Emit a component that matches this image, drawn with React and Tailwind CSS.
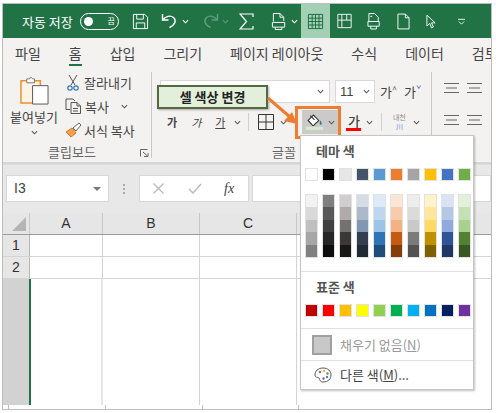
import React from 'react';

const themeTop = ['bg-[#ffffff]', 'bg-[#000000]', 'bg-[#e7e6e6]', 'bg-[#44546a]', 'bg-[#5b9bd5]', 'bg-[#ed7d31]', 'bg-[#a5a5a5]', 'bg-[#ffc000]', 'bg-[#4472c4]', 'bg-[#70ad47]'];

const themeShades = [
  ['bg-[#f2f2f2]', 'bg-[#d9d9d9]', 'bg-[#bfbfbf]', 'bg-[#a6a6a6]', 'bg-[#808080]'],
  ['bg-[#7f7f7f]', 'bg-[#595959]', 'bg-[#404040]', 'bg-[#262626]', 'bg-[#0d0d0d]'],
  ['bg-[#d0cece]', 'bg-[#afabab]', 'bg-[#757171]', 'bg-[#3b3838]', 'bg-[#181717]'],
  ['bg-[#d6dce5]', 'bg-[#adb9ca]', 'bg-[#8497b0]', 'bg-[#333f50]', 'bg-[#222a35]'],
  ['bg-[#deebf7]', 'bg-[#bdd7ee]', 'bg-[#9dc3e6]', 'bg-[#2e75b6]', 'bg-[#1f4e79]'],
  ['bg-[#fbe5d6]', 'bg-[#f8cbad]', 'bg-[#f4b183]', 'bg-[#c55a11]', 'bg-[#843c0c]'],
  ['bg-[#ededed]', 'bg-[#dbdbdb]', 'bg-[#c9c9c9]', 'bg-[#7b7b7b]', 'bg-[#525252]'],
  ['bg-[#fff2cc]', 'bg-[#ffe699]', 'bg-[#ffd966]', 'bg-[#bf9000]', 'bg-[#7f6000]'],
  ['bg-[#dae3f3]', 'bg-[#b4c7e7]', 'bg-[#8faadc]', 'bg-[#2f5597]', 'bg-[#203864]'],
  ['bg-[#e2f0d9]', 'bg-[#c5e0b4]', 'bg-[#a9d18e]', 'bg-[#548235]', 'bg-[#385723]'],
];

const standard = ['bg-[#c00000]', 'bg-[#ff0000]', 'bg-[#ffc000]', 'bg-[#ffff00]', 'bg-[#92d050]', 'bg-[#00b050]', 'bg-[#00b0f0]', 'bg-[#0070c0]', 'bg-[#002060]', 'bg-[#7030a0]'];

const tabs = ['파일', '홈', '삽입', '그리기', '페이지 레이아웃', '수식', '데이터', '검토'];

const Chev = ({ className = '', color = '#555' }) => (
  <svg viewBox="0 0 8 5" className={`w-[7px] h-[5px] shrink-0 ${className}`} fill="none" stroke={color} strokeWidth="1.2">
    <path d="M1 1l3 3 3-3" />
  </svg>
);

const Lines = ({ className = '' }) => (
  <svg viewBox="0 0 15 12" className={`w-[15px] h-[12px] ${className}`} fill="none" stroke="#666" strokeWidth="1">
    <path d="M0 1.500h15M2 6h11M0 10.500h15" />
  </svg>
);

const TitleIcons = () => (
  <>
    <svg viewBox="0 0 18 18" className="w-[17px] h-[17px] ml-[13px] shrink-0" fill="none" stroke="#fff" strokeWidth="1">
      <path d="M1.500 1.500h12l3 3v12h-15z M5 1.500v5h7v-5 M4.500 16.500v-6h9v6" />
    </svg>
    <svg viewBox="0 0 18 16" className="w-[18px] h-[16px] ml-[12px] shrink-0" fill="none" stroke="#fff" strokeWidth="1.400">
      <path d="M1.500 1v6h6 M1.500 7c3-4 8-5 11-2.500 3 3 2 7-4 10" />
    </svg>
    <Chev color="#fff" className="ml-[3px]" />
    <svg viewBox="0 0 18 16" className="w-[18px] h-[16px] ml-[12px] shrink-0" fill="none" stroke="#5f9e7c" strokeWidth="1.400">
      <path d="M16.500 1v6h-6 M16.500 7c-3-4-8-5-11-2.500-3 3-2 7 4 10" />
    </svg>
    <Chev color="#5f9e7c" className="ml-[3px]" />
    <svg viewBox="0 0 15 17" className="w-[15px] h-[17px] ml-[10px] shrink-0" fill="none" stroke="#fff" strokeWidth="1.200">
      <path d="M14 4V1H1l6.500 7.500L1 16h13v-3" />
    </svg>
    <svg viewBox="0 0 18 20" className="w-[17px] h-[19px] ml-[17px] shrink-0" fill="none" stroke="#fff" strokeWidth="1">
      <path d="M2.500 10V1.500h7l4 4v4 M9.500 1.500v4h4 M1.500 11h13v5h-13z M4.500 16v2.500h7V16" />
    </svg>
    <Chev color="#fff" className="ml-[3px]" />
    <div className="ml-[3px] w-[29px] h-[34px] shrink-0 bg-[#a3cfb4] flex items-center justify-center">
      <svg viewBox="0 0 18 18" className="w-[17px] h-[17px]" fill="none" stroke="#1d6b40" strokeWidth="1">
        <path d="M1.500 1.500h15v15h-15z M1.500 5.500h15M1.500 9h15M1.500 12.700h15M5.500 1.500v15M9 1.500v15M12.700 1.500v15" />
      </svg>
    </div>
    <svg viewBox="0 0 18 18" className="w-[17px] h-[16px] ml-[6px] shrink-0" fill="none" stroke="#fff" strokeWidth="1">
      <path d="M1.500 1.500h15v15h-15z M1.500 8h15M6 1.500v15M11.500 1.500v6.500" />
    </svg>
    <svg viewBox="0 0 16 20" className="w-[15px] h-[19px] ml-[14px] shrink-0" fill="none" stroke="#fff" strokeWidth="1">
      <path d="M2 10V1.500h6l4 4V10 M3.500 4.500h2 M1 10h12v5H1z M4 15v3h6v-3" />
    </svg>
    <svg viewBox="0 0 14 18" className="w-[13px] h-[17px] ml-[15px] shrink-0" fill="none" stroke="#fff" strokeWidth="1">
      <path d="M1 1h8l4 4v12H1z M9 1v4h4" />
    </svg>
    <svg viewBox="0 0 12 16" className="w-[11px] h-[15px] ml-[16px] shrink-0" fill="none" stroke="#fff" strokeWidth="1">
      <path d="M1 1v12l3-3 2 5 2-1-2-4.500h4z" />
    </svg>
    <svg viewBox="0 0 8 7" className="w-[7px] h-[7px] ml-[21px] shrink-0" fill="none" stroke="#fff" strokeWidth="1">
      <path d="M0 1h8M1 3.500l3 3 3-3" />
    </svg>
  </>
);

const ClipboardGroup = () => (
  <div className="w-[148px] shrink-0 flex flex-col">
    <div className="flex h-[72px]">
      <div className="w-[62px] flex flex-col items-center pt-[8px]">
        <svg viewBox="0 0 30 30" className="w-[29px] h-[29px]" fill="none">
          <path d="M1 5h20v23H1z" fill="#fdf3e5" stroke="#e8912c" strokeWidth="1.500" />
          <path d="M7 5V3h3l1-2 2 2h2v4H7z" fill="#fff" stroke="#777" />
          <path d="M13 10h16v19H13z" fill="#fff" stroke="#555" />
        </svg>
        <span className="text-[13px] leading-none mt-[5px] text-[#444] whitespace-nowrap">붙여넣기</span>
        <Chev className="mt-[7px]" />
      </div>
      <div className="flex flex-col pt-[5px] gap-[6px] text-[13px] leading-none text-[#444]">
        <div className="flex items-center h-[18px]">
          <svg viewBox="0 0 12 17" className="w-[12px] h-[17px] ml-[2px]" fill="none">
            <path d="M2 1l6 10M10 1L4 11" stroke="#555" strokeWidth="1" />
            <circle cx="3" cy="14" r="2.200" stroke="#2f75b5" strokeWidth="1.200" />
            <circle cx="9" cy="14" r="2.200" stroke="#2f75b5" strokeWidth="1.200" />
          </svg>
          <span className="ml-[5px] whitespace-nowrap">잘라내기</span>
        </div>
        <div className="flex items-center h-[18px]">
          <svg viewBox="0 0 17 16" className="w-[17px] h-[16px]" fill="none" stroke="#555" strokeWidth="1">
            <path d="M5 11.500H1V1h7l2 2 M6 4.500h6l3.500 3.500v7.500H6z M12 4.500V8h3.500 M8 10.500h5M8 13h5" />
          </svg>
          <span className="ml-[3px] whitespace-nowrap">복사</span>
          <Chev className="ml-[12px]" />
        </div>
        <div className="flex items-center h-[18px]">
          <svg viewBox="0 0 17 16" className="w-[17px] h-[16px]" fill="none">
            <path d="M1 10l6-4 4 5-5 4z" fill="#f0a050" stroke="#d87a20" />
            <path d="M8 6l6-5 2 2-5 6z" fill="#fff" stroke="#666" />
          </svg>
          <span className="ml-[2px] whitespace-nowrap">서식 복사</span>
        </div>
      </div>
    </div>
    <div className="relative flex-1 flex justify-center pr-[10px] pt-[5px] text-[13px] leading-none text-[#666]">
      클립보드
      <svg viewBox="0 0 9 8" className="absolute right-[2px] top-[9px] w-[9px] h-[8px]" fill="none" stroke="#666" strokeWidth="1">
        <path d="M0.500 7.500v-7h7M3 3l4.500 4M4 7.500h4V4" />
      </svg>
    </div>
  </div>
);

const FontGroup = () => (
  <div className="w-[279px] shrink-0 flex flex-col">
    <div className="h-[72px] pl-[8px] pt-[12px] flex flex-col">
      <div className="flex items-center h-[23px]">
        <div className="w-[170px] h-full bg-white border border-[#d8d8d8] flex items-center justify-end pr-[5px]">
          <Chev />
        </div>
        <div className="ml-[5px] w-[40px] h-full bg-white border border-[#d8d8d8] flex items-center justify-between px-[4px] text-[13px] text-[#444] font-['Liberation_Sans',sans-serif]">
          11
          <Chev />
        </div>
        <span className="ml-[5px] text-[13px] leading-none text-[#444] flex">
          가<span className="text-[#555] text-[9px] leading-none">^</span>
        </span>
        <span className="ml-[7px] text-[13px] leading-none text-[#444] flex">
          가<span className="text-[#2f75b5] text-[9px] leading-none">ˇ</span>
        </span>
      </div>
      <div className="flex items-center h-[24px] mt-[7px] ml-[7px] text-[11px] leading-none text-[#444]">
        <span className="font-bold">가</span>
        <span className="ml-[14px] italic">가</span>
        <span className="ml-[14px] underline">가</span>
        <Chev className="ml-[9px]" />
        <div className="ml-[7px] h-[18px] border-l border-[#d0d0d0]" />
        <svg viewBox="0 0 16 16" className="w-[16px] h-[16px] ml-[9px]" fill="none" stroke="#333" strokeWidth="1">
          <path d="M0.500 0.500h15v15h-15z M0.500 8h15M8 0.500v15" />
        </svg>
        <Chev className="ml-[6px]" />
        <div className="ml-[15px] w-[36px] h-[24px] bg-[#cbcac9] flex items-center pl-[4px]">
          <svg viewBox="0 0 16 15" className="w-[17px] h-[16px]" fill="none">
            <path d="M2 6l5-5 5 5-4.500 4.500a1 1 0 0 1-1.500 0z" fill="#fff" stroke="#333" />
            <path d="M4 1.500l4 4" stroke="#333" />
            <path d="M13.500 6c1.500 2 2 3.500 0.500 4-1.500 0-1.500-2-0.500-4z" fill="#2f75b5" />
            <path d="M0 12h16v3H0z" fill="#d9e8cf" />
          </svg>
          <Chev className="ml-[5px]" />
        </div>
        <div className="ml-[8px] flex flex-col items-center w-[15px]">
          <span className="font-medium text-[13px] leading-none">가</span>
          <span className="w-[15px] h-[3px] bg-[#ff0000] mt-[1px]" />
        </div>
        <Chev className="ml-[5px]" />
        <div className="ml-[8px] h-[18px] border-l border-[#d0d0d0]" />
        <div className="ml-[7px] flex flex-col items-center w-[20px] text-[7px] leading-[9px] text-[#888]">
          <span>내천</span>
          <span className="text-[#4a90d9]">川</span>
        </div>
        <Chev className="ml-[4px]" />
      </div>
    </div>
    <div className="flex-1 pt-[5px] pl-[120px] text-[13px] leading-none text-[#666]">글꼴</div>
  </div>
);

const FormulaBar = () => (
  <div className="h-[49px] shrink-0 bg-[#e8e8e8] flex pl-[3px] pt-[10px] border-t border-[#dcdcdc]">
    <div className="w-[103px] h-[27px] bg-white border border-[#d8d8d8] flex items-center justify-between pl-[7px] pr-[7px] text-[14px] text-[#444] font-['Liberation_Sans',sans-serif]">
      I3
      <span className="w-0 h-0 border-x-[4px] border-x-transparent border-t-[4px] border-t-[#777]" />
    </div>
    <div className="w-[30px] h-[27px] flex flex-col items-center justify-center gap-[2px]">
      <span className="w-[2px] h-[2px] bg-[#aaa]" />
      <span className="w-[2px] h-[2px] bg-[#aaa]" />
      <span className="w-[2px] h-[2px] bg-[#aaa]" />
    </div>
    <div className="w-[110px] h-[27px] bg-white border border-[#d8d8d8] flex items-center pl-[13px]">
      <svg viewBox="0 0 11 11" className="w-[11px] h-[11px]" fill="none" stroke="#bbb" strokeWidth="1.300">
        <path d="M0.500 0.500l10 10M10.500 0.500l-10 10" />
      </svg>
      <svg viewBox="0 0 14 11" className="w-[14px] h-[11px] ml-[24px]" fill="none" stroke="#bbb" strokeWidth="1.500">
        <path d="M1 6l4 4 8-9" />
      </svg>
      <span className="ml-[22px] text-[14px] italic text-[#444] font-['Liberation_Serif',serif]">fx</span>
    </div>
    <div className="ml-[3px] flex-1 h-[27px] bg-white border border-[#d8d8d8]" />
  </div>
);

const Sheet = () => (
  <div className="flex-1 flex flex-col min-h-0">
    <div className="flex h-[22px] shrink-0 bg-[#e6e6e6] border-b border-[#9a9a9a] text-[14px] text-[#333] font-['Liberation_Sans',sans-serif]">
      <div className="w-[27px] shrink-0 border-r border-[#c8c8c8] relative">
        <span className="absolute right-[3px] bottom-[3px] w-0 h-0 border-l-[14px] border-l-transparent border-b-[14px] border-b-[#b5b5b5]" />
      </div>
      <div className="w-[73px] shrink-0 border-r border-[#c8c8c8] flex items-center justify-center">A</div>
      <div className="w-[97px] shrink-0 border-r border-[#c8c8c8] flex items-center justify-center">B</div>
      <div className="w-[97px] shrink-0 border-r border-[#c8c8c8] flex items-center justify-center">C</div>
      <div className="flex-1" />
    </div>
    {['1', '2'].map((n) => (
      <div key={n} className="flex h-[22px] shrink-0 border-b border-[#d4d4d4] text-[14px] text-[#333] font-['Liberation_Sans',sans-serif]">
        <div className="w-[27px] shrink-0 bg-[#e6e6e6] border-r border-[#b8b8b8] flex items-center justify-center">{n}</div>
        <div className="w-[73px] shrink-0 border-r border-[#d4d4d4]" />
        <div className="w-[97px] shrink-0 border-r border-[#d4d4d4]" />
        <div className="w-[97px] shrink-0 border-r border-[#d4d4d4]" />
      </div>
    ))}
    <div className="flex flex-1">
      <div className="w-[26px] shrink-0 bg-[#d2d2d2]" />
      <div className="w-[2px] shrink-0 bg-[#217346]" />
      <div className="w-[72px] shrink-0 border-r-2 border-[#e8e8e8]" />
      <div className="w-[97px] shrink-0 border-r border-[#d4d4d4]" />
      <div className="w-[97px] shrink-0 border-r border-[#d4d4d4]" />
    </div>
    <div className="h-[4px] shrink-0 flex pl-[5px]">
      <div className="w-[97px] shrink-0 border-l border-[#c0c0c0]" />
      <div className="w-[97px] shrink-0 border-l border-[#c0c0c0]" />
      <div className="w-[96px] shrink-0 border-l border-[#c0c0c0]" />
      <div className="border-l border-[#c0c0c0]" />
    </div>
  </div>
);

const ColorMenu = () => (
  <div className="absolute left-[297px] top-[131px] w-[174px] h-[255px] bg-white border border-[#c6c6c6] shadow-[1px_1px_2px_rgba(0,0,0,0.25)] flex flex-col">
    <div className="pl-[15px] pt-[7px] h-[32px] text-[13px] leading-[16px] font-bold text-[#555]">테마 색</div>
    <div className="pl-[4px] flex gap-[4px]">
      {themeTop.map((c) => (
        <span key={c} className={`w-[13px] h-[13px] border border-[#e2e2e2] ${c}`} />
      ))}
    </div>
    <div className="pl-[4px] mt-[13px] flex gap-[4px]">
      {themeShades.map((col) => (
        <div key={col[0]} className="w-[13px] h-[64px] flex flex-col border border-[#e2e2e2]">
          {col.map((c) => (
            <span key={c} className={`flex-1 ${c}`} />
          ))}
        </div>
      ))}
    </div>
    <div className="mt-[13px] border-t border-[#e0e0e0]" />
    <div className="pl-[15px] pt-[7px] h-[32px] text-[13px] leading-[16px] font-bold text-[#555]">표준 색</div>
    <div className="pl-[4px] flex gap-[4px]">
      {standard.map((c) => (
        <span key={c} className={`w-[13px] h-[13px] border border-[#e2e2e2] ${c}`} />
      ))}
    </div>
    <div className="mt-[11px] border-t border-[#e0e0e0]" />
    <div className="h-[31px] flex items-center pl-[11px] text-[13px] text-[#9a9a9a]">
      <span className="w-[20px] h-[20px] bg-[#c8c8c8] border-2 border-[#a0a0a0]" />
      <span className="ml-[8px]">채우기 없음(<span className="underline">N</span>)</span>
    </div>
    <div className="border-t border-[#e0e0e0]" />
    <div className="flex-1 flex items-center pl-[13px] text-[13px] text-[#444]">
      <svg viewBox="0 0 18 16" className="w-[18px] h-[16px]" fill="none">
        <path d="M9 1C4 1 1 4 1 8c0 3 3 2 4 3 1 2 1 4 4 4 5 0 8-3 8-7 0-4-3-7-8-7z" stroke="#555" strokeWidth="1" />
        <circle cx="6" cy="5" r="1.200" fill="#e05050" />
        <circle cx="10" cy="4" r="1.200" fill="#f0b030" />
        <circle cx="13.500" cy="6.500" r="1.200" fill="#50a050" />
        <circle cx="13" cy="10" r="1.200" fill="#4080d0" />
        <circle cx="9.500" cy="11.500" r="1.200" fill="#a050b0" />
      </svg>
      <span className="ml-[8px]">다른 색(<span className="underline">M</span>)...</span>
    </div>
  </div>
);

export default function App() {
  return (
    <div className="w-[496px] h-[413px] bg-white pl-[2px] pt-[3px] font-['Noto_Sans_CJK_KR',sans-serif]">
      <div className="relative w-[490px] h-[407px] border border-[#bdbdbd] flex flex-col overflow-hidden">
        {/* title bar */}
        <div className="h-[34px] shrink-0 bg-[#217346] flex items-center pl-[19px] text-white">
          <span className="text-[13px] leading-none whitespace-nowrap">자동 저장</span>
          <div className="ml-[7px] w-[39px] h-[17px] shrink-0 rounded-full border border-white flex items-center justify-between px-[3px]">
            <span className="w-[9px] h-[9px] rounded-full bg-white" />
            <span className="text-[8px] leading-none">끔</span>
          </div>
          <TitleIcons />
        </div>

        {/* tabs */}
        <div className="h-[30px] shrink-0 bg-[#f3f2f1] flex pl-[12px] gap-[28px] pt-[6px] text-[14px] leading-[18px] text-[#444] whitespace-nowrap">
          {tabs.map((t) => (
            <div key={t} className="relative">
              {t}
              {t === '홈' && <span className="absolute left-0 right-0 top-[20px] h-[2px] bg-[#217346]" />}
            </div>
          ))}
        </div>

        {/* ribbon */}
        <div className="h-[96px] shrink-0 bg-[#f3f2f1] flex border-b-2 border-[#d6d6d6]">
          <ClipboardGroup />
          <div className="w-px my-[4px] bg-[#c8c8c8] shrink-0" />
          <FontGroup />
          <div className="w-px my-[4px] bg-[#c8c8c8] shrink-0" />
          <div className="flex-1 pl-[12px] pt-[14px] flex flex-col gap-[20px]">
            <div className="flex gap-[8px]">
              <Lines />
              <Lines />
            </div>
            <div className="flex gap-[8px]">
              <Lines />
              <Lines />
            </div>
          </div>
        </div>

        <FormulaBar />
        <Sheet />

        {/* callout */}
        <div className="absolute left-[154px] top-[81px] w-[111px] h-[24px] bg-[#e2efda] border-2 border-[#54693f] shadow-[1px_1px_2px_rgba(0,0,0,0.3)] flex items-center justify-center text-[13px] font-bold text-[#222] whitespace-nowrap">
          셀 색상 변경
        </div>
        <svg viewBox="0 0 34 30" className="absolute left-[264px] top-[92px] w-[34px] h-[30px]" fill="none">
          <path d="M1 2l22 19" stroke="#ed7d31" strokeWidth="3" />
          <path d="M17 25l13 3-5-12z" fill="#ed7d31" />
        </svg>
        <div className="absolute left-[292px] top-[102px] w-[46px] h-[33px] border-[3px] border-[#ed7d31]" />

        <ColorMenu />
      </div>
    </div>
  );
}
